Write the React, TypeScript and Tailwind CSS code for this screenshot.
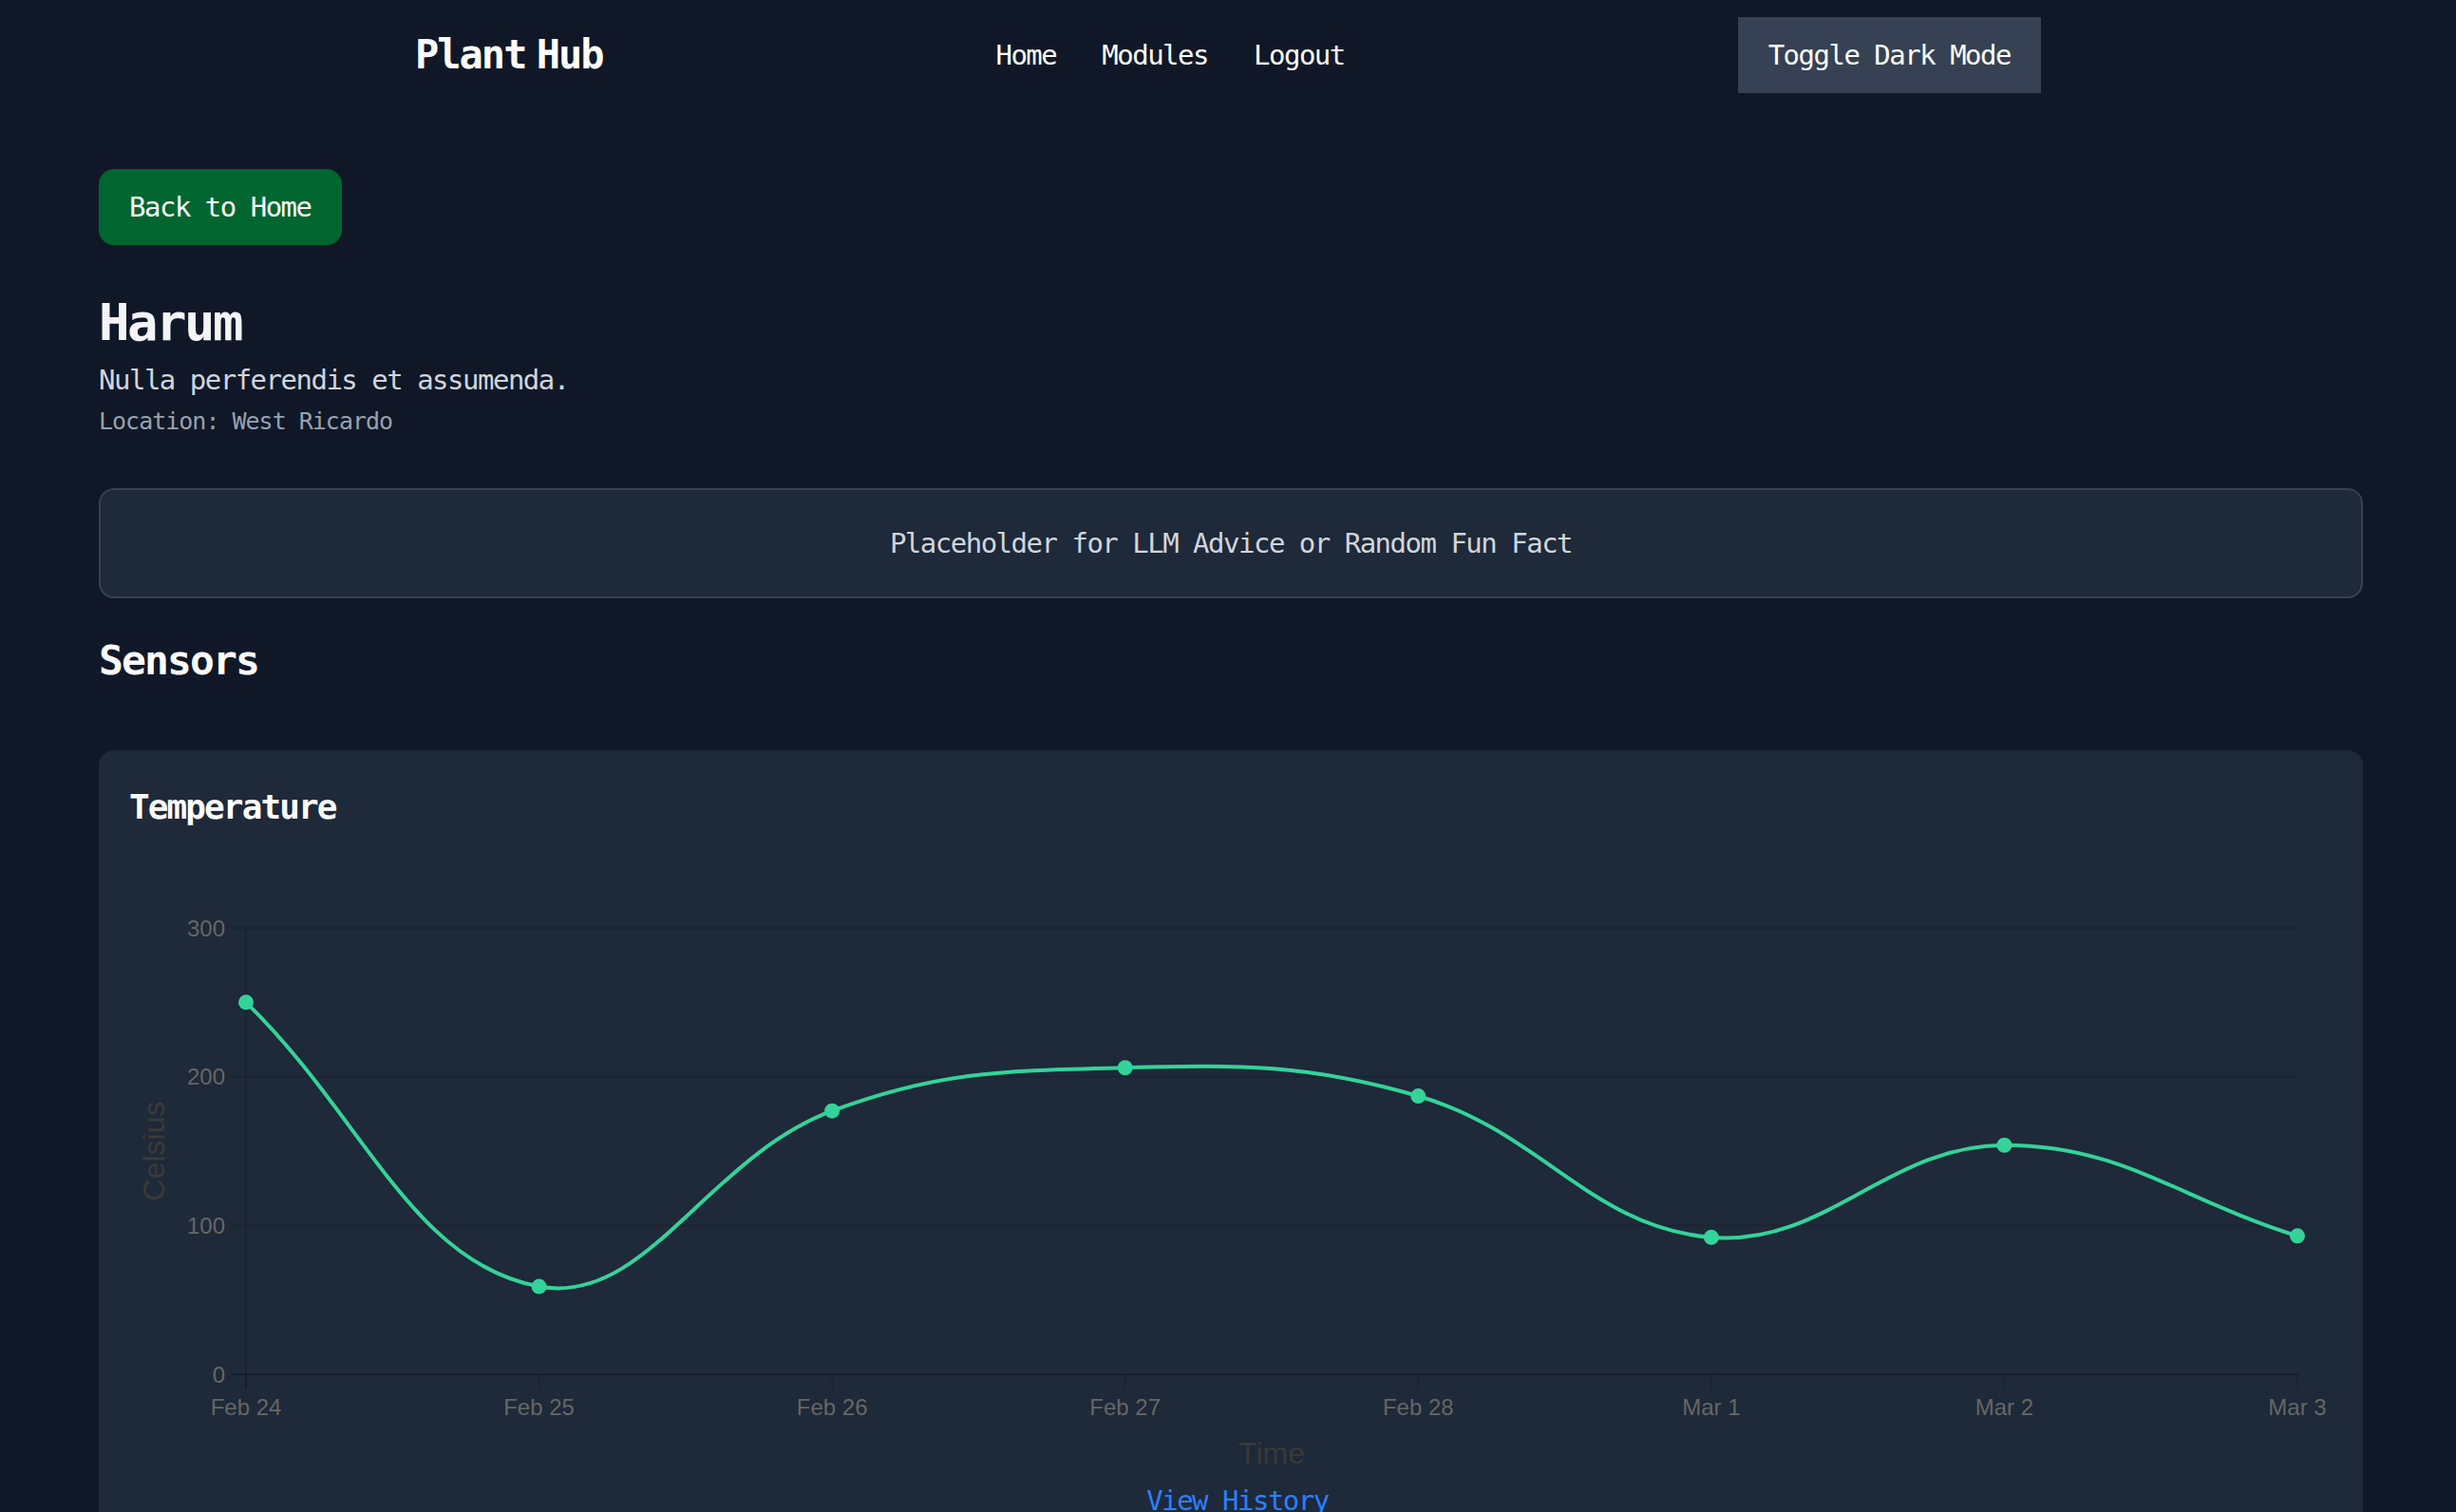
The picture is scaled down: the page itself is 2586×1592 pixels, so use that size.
import React from "react";

const labels = ["Feb 24", "Feb 25", "Feb 26", "Feb 27", "Feb 28", "Mar 1", "Mar 2", "Mar 3"];
const values = [250, 59, 177, 206, 187, 92, 154, 93];

// chart area inside the svg
const X0 = 123;
const X1 = 2283;
const YB = 547; // value 0
const YT = 77; // value 300

const xAt = (i: number) => X0 + ((X1 - X0) * i) / (labels.length - 1);
const yAt = (v: number) => YB - ((YB - YT) * v) / 300;

type Pt = { x: number; y: number };

// same control points as chart.js splineCurve, tension 0.4
function splinePath(pts: Pt[], t = 0.4) {
  const clampX = (x: number) => Math.min(Math.max(x, X0), X1);
  const clampY = (y: number) => Math.min(Math.max(y, YT), YB);
  const cps = pts.map((p, i) => {
    const prev = pts[i - 1] ?? p;
    const next = pts[i + 1] ?? p;
    const d01 = Math.hypot(p.x - prev.x, p.y - prev.y);
    const d12 = Math.hypot(next.x - p.x, next.y - p.y);
    let s01 = d01 / (d01 + d12);
    let s12 = d12 / (d01 + d12);
    if (isNaN(s01)) s01 = 0;
    if (isNaN(s12)) s12 = 0;
    const fa = t * s01;
    const fb = t * s12;
    return {
      px: clampX(p.x - fa * (next.x - prev.x)),
      py: clampY(p.y - fa * (next.y - prev.y)),
      nx: clampX(p.x + fb * (next.x - prev.x)),
      ny: clampY(p.y + fb * (next.y - prev.y)),
    };
  });
  let d = `M${pts[0].x},${pts[0].y}`;
  for (let i = 1; i < pts.length; i++) {
    d += ` C${cps[i - 1].nx},${cps[i - 1].ny} ${cps[i].px},${cps[i].py} ${pts[i].x},${pts[i].y}`;
  }
  return d;
}

const TemperatureChart = () => {
  const pts = values.map((v, i) => ({ x: xAt(i), y: yAt(v) }));
  const grid = "rgba(0,0,0,0.1)";
  const font = "'Liberation Sans', Arial, sans-serif";
  return (
    <svg width={2320} height={656} className="block">
      {[0, 100, 200, 300].map((v) => (
        <g key={v}>
          <line x1={X0 - 16} x2={X1} y1={yAt(v)} y2={yAt(v)} stroke={grid} strokeWidth={2} />
          <text x={101} y={yAt(v) + 8.5} textAnchor="end" fontSize={24} fill="#666" fontFamily={font}>
            {v}
          </text>
        </g>
      ))}
      {labels.map((l, i) => (
        <g key={l}>
          <line x1={xAt(i)} x2={xAt(i)} y1={YB} y2={YB + 16} stroke={grid} strokeWidth={2} />
          <text x={xAt(i)} y={590} textAnchor="middle" fontSize={24} fill="#666" fontFamily={font}>
            {l}
          </text>
        </g>
      ))}
      {/* axis borders */}
      <line x1={X0} x2={X0} y1={YT} y2={YB + 16} stroke={grid} strokeWidth={2} />
      <line x1={X0 - 16} x2={X1} y1={YB} y2={YB} stroke={grid} strokeWidth={2} />
      <text
        transform="translate(37 312) rotate(-90)"
        textAnchor="middle"
        fontSize={32}
        fill="#3a3a38"
        fontFamily={font}
      >
        Celsius
      </text>
      <text x={1203} y={641} textAnchor="middle" fontSize={32} fill="#3a3a38" fontFamily={font}>
        Time
      </text>
      <path d={splinePath(pts)} fill="none" stroke="#34d399" strokeWidth={4} />
      {pts.map((p, i) => (
        <circle key={i} cx={p.x} cy={p.y} r={8} fill="#34d399" />
      ))}
    </svg>
  );
};

export default function App() {
  return (
    <div className="min-h-screen bg-gray-900 text-white font-['DejaVu_Sans_Mono','Liberation_Mono',monospace]">
      <nav className="mx-auto flex w-[1712px] items-center justify-between py-[18px]">
        <div className="text-[42px] leading-[64px] font-bold tracking-[-2px] [word-spacing:-12px]">Plant Hub</div>
        <div className="flex items-center gap-[48px] text-[29px] leading-[48px] tracking-[-1.5px]">
          <a href="#">Home</a>
          <a href="#">Modules</a>
          <a href="#">Logout</a>
        </div>
        <button className="bg-gray-700 px-8 py-4 text-[29px] leading-[48px] tracking-[-1.5px]">Toggle Dark Mode</button>
      </nav>

      <main className="pl-[104px] pr-[98px] pt-[62px]">
        <button className="rounded-2xl bg-green-800 px-8 py-4 text-[29px] leading-[48px] tracking-[-1.5px]">
          Back to Home
        </button>
        <h1 className="mt-[46px] text-[54px] leading-[72px] font-bold tracking-[-2.5px] text-gray-100">Harum</h1>
        <p className="text-[29px] leading-[48px] tracking-[-1.5px] text-gray-300">Nulla perferendis et assumenda.</p>
        <p className="text-[25px] leading-[40px] tracking-[-1px] text-gray-400">Location: West Ricardo</p>

        <div className="mt-[50px] rounded-2xl border-2 border-gray-700 bg-gray-800 py-8 text-center text-[29px] leading-[48px] tracking-[-1.5px] text-gray-300">
          Placeholder for LLM Advice or Random Fun Fact
        </div>

        <h2 className="mt-[33px] text-[43px] leading-[64px] font-bold tracking-[-1.9px]">Sensors</h2>

        <div className="mt-[63px] rounded-2xl bg-gray-800 p-8">
          <h3 className="text-[36px] leading-[56px] font-bold tracking-[-1.9px]">Temperature</h3>
          <div className="mt-[22px]">
            <TemperatureChart />
          </div>
          <div className="pl-[14px] text-center">
            <a href="#" className="text-[29px] leading-[48px] tracking-[-1.5px] text-blue-500">
              View History
            </a>
          </div>
        </div>
      </main>
    </div>
  );
}
